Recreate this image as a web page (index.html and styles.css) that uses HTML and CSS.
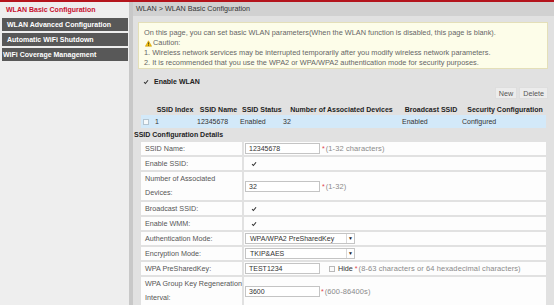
FILE: index.html
```html
<!DOCTYPE html>
<html lang="en">
  <head>
    <meta charset="UTF-8" />
    <title>WLAN Basic Configuration</title>
    <link rel="stylesheet" href="styles.css">
  </head>
  <body>
    <div class="topbar"></div>
    <div class="frame">
      <!-- left menu -->
      <ul class="side">
        <li class="on">WLAN Basic Configuration</li>
        <li>WLAN Advanced Configuration</li>
        <li>Automatic WiFi Shutdown</li>
        <li class="tight">WiFi Coverage Management</li>
      </ul>
      <div class="split"></div>

      <div class="main">
        <div class="crumb">WLAN &gt; WLAN Basic Configuration</div>
        <div class="content">
          <div class="notice">
            <p>On this page, you can set basic WLAN parameters(When the WLAN function is disabled, this page is blank).</p>
            <p class="caution">
              <svg class="warn" viewBox="0 0 10 9"><path d="M5 0.6 L9.5 8.5 L0.5 8.5 Z" fill="#f4c20d" stroke="#c89400" stroke-width="0.7" /><rect x="4.5" y="3" width="1" height="3" fill="#222" /><rect x="4.5" y="6.7" width="1" height="1" fill="#222" /></svg>Caution:
            </p>
            <p>1. Wireless network services may be interrupted temporarily after you modify wireless network parameters.</p>
            <p>2. It is recommended that you use the WPA2 or WPA/WPA2 authentication mode for security purposes.</p>
          </div>

          <div class="enable">
            <span class="chk"><svg viewBox="0 0 8 8"><path d="M1.4 4.3 L3.2 6.1 L6.7 1.6" /></svg></span>Enable WLAN
          </div>

          <div class="btns">
            <button class="btn">New</button>
            <button class="btn">Delete</button>
          </div>

          <!-- SSID list -->
          <table class="list">
            <colgroup>
              <col style="width: 10px" />
              <col style="width: 44px" />
              <col style="width: 43px" />
              <col style="width: 43px" />
              <col style="width: 117px" />
              <col style="width: 62px" />
              <col style="width: 86px" />
            </colgroup>
            <tr class="head">
              <th></th>
              <th>SSID Index</th>
              <th>SSID Name</th>
              <th>SSID Status</th>
              <th>Number of Associated Devices</th>
              <th>Broadcast SSID</th>
              <th>Security Configuration</th>
            </tr>
            <tr class="row">
              <td><span class="box"></span></td>
              <td class="idx">1</td>
              <td>12345678</td>
              <td>Enabled</td>
              <td>32</td>
              <td class="bc">Enabled</td>
              <td>Configured</td>
            </tr>
          </table>

          <div class="sect">SSID Configuration Details</div>

          <!-- SSID details -->
          <table class="form">
            <tr>
              <td class="lbl">SSID Name:</td>
              <td class="val"><span class="inp">12345678</span><span class="req">*</span><span class="hint">(1-32 characters)</span></td>
            </tr>
            <tr>
              <td class="lbl">Enable SSID:</td>
              <td class="val"><span class="chk in"><svg viewBox="0 0 8 8"><path d="M1.4 4.3 L3.2 6.1 L6.7 1.6" /></svg></span></td>
            </tr>
            <tr class="tall">
              <td class="lbl">Number of Associated<br />Devices:</td>
              <td class="val"><span class="inp">32</span><span class="req">*</span><span class="hint">(1-32)</span></td>
            </tr>
            <tr>
              <td class="lbl">Broadcast SSID:</td>
              <td class="val"><span class="chk in"><svg viewBox="0 0 8 8"><path d="M1.4 4.3 L3.2 6.1 L6.7 1.6" /></svg></span></td>
            </tr>
            <tr>
              <td class="lbl">Enable WMM:</td>
              <td class="val"><span class="chk in"><svg viewBox="0 0 8 8"><path d="M1.4 4.3 L3.2 6.1 L6.7 1.6" /></svg></span></td>
            </tr>
            <tr>
              <td class="lbl">Authentication Mode:</td>
              <td class="val"><span class="sel">WPA/WPA2 PreSharedKey<span class="arrow">&#9660;</span></span></td>
            </tr>
            <tr>
              <td class="lbl">Encryption Mode:</td>
              <td class="val"><span class="sel">TKIP&amp;AES<span class="arrow">&#9660;</span></span></td>
            </tr>
            <tr>
              <td class="lbl">WPA PreSharedKey:</td>
              <td class="val"><span class="inp">TEST1234</span><span class="box hide"></span><span class="hidetxt">Hide</span><span class="req">*</span><span class="hint">(8-63 characters or 64 hexadecimal characters)</span></td>
            </tr>
            <tr class="tall">
              <td class="lbl">WPA Group Key Regeneration<br />Interval:</td>
              <td class="val"><span class="inp">3600</span><span class="req tight">*</span><span class="hint">(600-86400s)</span></td>
            </tr>
          </table>
        </div>
      </div>
    </div>
  </body>
</html>
```

FILE: styles.css
```css
* {
  box-sizing: border-box;
}

body {
  margin: 0;
  font-family: "Liberation Sans", Arial, sans-serif;
  font-size: 7px;
  color: #333;
  background-color: #e1e1e1;
  overflow: hidden;
}

p {
  margin: 0;
}

.topbar {
  height: 2px;
  background-color: #b4141c;
}

.frame {
  display: flex;
  height: 303px;
}

/* left menu */
.side {
  width: 131px;
  margin: 0;
  padding: 0;
  list-style: none;
  background-color: #eeeeee;
}
.side li {
  height: 13px;
  line-height: 13px;
  margin: 0 1px 2px 2px;
  padding-left: 5px;
  background-color: #585858;
  color: white;
  font-weight: bold;
  white-space: nowrap;
}
.side li.on {
  height: 15px;
  line-height: 15px;
  margin: 0 0 1px 0;
  padding-left: 6px;
  background-color: transparent;
  color: #c8102e;
}
.side li.tight {
  padding-left: 1px;
}

.split {
  width: 4px;
  background-color: #c8c8c8;
}

.main {
  flex: 1;
}

.crumb {
  height: 14px;
  line-height: 14px;
  padding-left: 3px;
  font-size: 7.2px;
  background-color: #d1d1d1;
  color: #333;
}

.content {
  padding: 6px 6px 0 5px;
}

/* notice box */
.notice {
  height: 47px;
  padding: 5px 0 0 5px;
  font-size: 7.35px;
  background-color: #fdfde9;
  border: 1px solid #e4dfb8;
  color: #666;
}
.notice p {
  line-height: 10px;
  white-space: nowrap;
}
.caution {
  display: flex;
  align-items: center;
}
.warn {
  width: 7px;
  height: 7px;
  margin: 0 1px 0 1px;
}

.enable {
  display: flex;
  align-items: center;
  margin-top: 8px;
  padding-left: 5px;
  line-height: 10px;
  font-weight: bold;
  color: #222;
}
.enable .chk {
  margin-right: 5px;
}

.chk {
  display: inline-block;
  width: 6px;
  height: 6px;
}
.chk svg {
  display: block;
  width: 6px;
  height: 6px;
}
.chk path {
  fill: none;
  stroke: #333;
  stroke-width: 1.4;
}

.btns {
  display: flex;
  justify-content: flex-end;
  gap: 2px;
  height: 12px;
}
.btn {
  height: 12px;
  padding: 0 3px;
  font-family: inherit;
  font-size: 7.2px;
  color: #555;
  background-color: #ececec;
  border: 1px solid #dedede;
}

/* ssid list */
.list {
  width: 405px;
  margin: 4px 0 0 3px;
  border-collapse: collapse;
  table-layout: fixed;
}
.list th {
  height: 12px;
  padding: 1px 0 0 4px;
  font-weight: bold;
  color: #1e1e1e;
  white-space: nowrap;
  text-align: center;
}
.list td {
  height: 13px;
  padding: 0 0 0 2px;
  color: #333;
  white-space: nowrap;
}
.list .row {
  background-color: #d3e9f9;
}
.list td.idx {
  padding-left: 4px;
}
.list td.bc {
  padding-left: 4px;
}

.box {
  display: inline-block;
  width: 6px;
  height: 6px;
  border: 1px solid #b4c4d0;
  background-color: #f6f9fb;
  vertical-align: middle;
}

.sect {
  height: 12px;
  line-height: 13px;
  margin-left: -4px;
  font-weight: bold;
  color: #1e1e1e;
}

/* details form */
.form {
  width: 409px;
  margin-left: 1px;
  border-spacing: 2px;
  table-layout: fixed;
}
.form td {
  height: 13px;
  padding: 0;
  background-color: #fdfdfd;
  white-space: nowrap;
}
.form .lbl {
  width: 101px;
  padding-left: 4px;
  font-size: 7.2px;
  color: #555;
}
.form .tall td {
  height: 28px;
}
.form .tall .lbl {
  line-height: 14px;
}
.form .val {
  padding-left: 1px;
}
.form .val > * {
  vertical-align: middle;
}

.inp {
  display: inline-block;
  width: 75px;
  height: 11px;
  line-height: 9px;
  padding-left: 3px;
  border: 1px solid #c4c4c4;
  background-color: white;
  color: #333;
}

.sel {
  display: inline-flex;
  justify-content: space-between;
  width: 110px;
  height: 11px;
  line-height: 9px;
  padding-left: 4px;
  border: 1px solid #c4c4c4;
  background-color: white;
  color: #333;
}
.arrow {
  width: 8px;
  border-left: 1px solid #d8d8d8;
  font-size: 5px;
  text-align: center;
  color: #222;
}

.chk.in {
  margin-left: 6px;
}

.req {
  margin-left: 2px;
  color: #e0404a;
}
.req.tight {
  margin-left: 1px;
}
.hint {
  margin-left: 1px;
  font-size: 7.5px;
  letter-spacing: 0.1px;
  color: #8a8a8a;
}

.box.hide {
  margin-left: 9px;
  border-color: #b9b9b9;
  background-color: #fafafa;
}
.hidetxt {
  margin-left: 3px;
  font-size: 7.2px;
  color: #333;
}
```
